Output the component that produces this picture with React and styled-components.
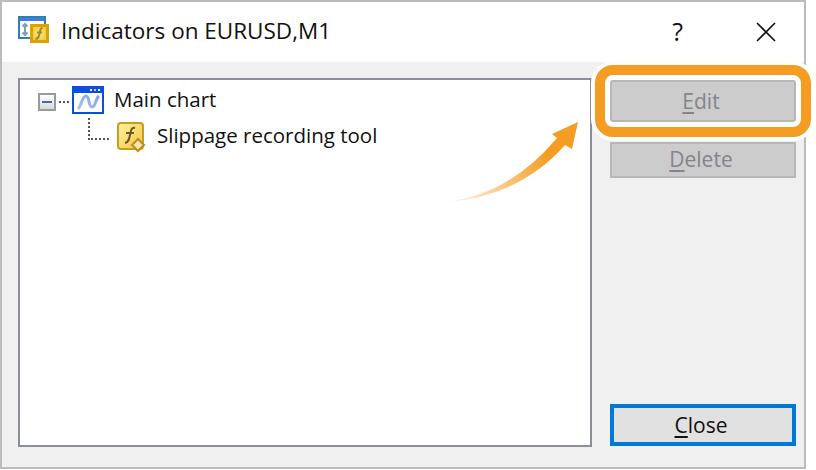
import React from 'react';
import styled, { createGlobalStyle } from 'styled-components';

const GlobalStyle = createGlobalStyle`
	html, body {
		margin: 0;
		padding: 0;
		background: #fff;
	}
	body {
		font-family: 'Open Sans', 'Noto Sans', 'Liberation Sans', sans-serif;
		color: #111;
	}
`;

const Page = styled.div`
	width: 816px;
	height: 470px;
	overflow: hidden;
	background: #fff;
`;

const Window = styled.div`
	position: relative;
	box-sizing: border-box;
	width: 806px;
	height: 469px;
	border: 2px solid #bcbcbc;
	display: flex;
	flex-direction: column;
	background: #f0f0f0;
`;

const TitleBar = styled.div`
	height: 60px;
	flex: none;
	background: #fff;
	display: flex;
	align-items: center;
	padding: 0 28px 0 16px;
`;

const TitleIcon = styled.svg`
	width: 34px;
	height: 32px;
	flex: none;
	margin-right: 9px;
`;

const Title = styled.span`
	font-size: 22.5px;
	line-height: 28px;
	margin-bottom: 2px;
	flex: 1;
`;

const HelpButton = styled.span`
	font-size: 25px;
	line-height: 28px;
	margin: 0 73px 2px 0;
`;

const Body = styled.div`
	flex: 1;
	display: flex;
	padding: 16px 8px 20px 16px;
	gap: 18px;
`;

const TreePanel = styled.div`
	box-sizing: border-box;
	width: 574px;
	border: 2px solid #8a8e96;
	background: #fff;
	padding: 4px 0 0 18px;
`;

const TreeRow = styled.div`
	display: flex;
	align-items: center;
	height: 36px;
	font-size: 20.5px;
	padding-left: ${(props) => props.$indent || 0}px;
`;

const TreeLabel = styled.span`
	margin-bottom: 6px;
`;

const Expander = styled.span`
	box-sizing: border-box;
	width: 18px;
	height: 18px;
	flex: none;
	border: 2px solid #9a9a9a;
	background: linear-gradient(#fff, #d8d8d8);
	display: flex;
	align-items: center;
	justify-content: center;
	&::after {
		content: '';
		width: 10px;
		height: 2px;
		background: #4a689f;
	}
`;

const DotsH = styled.span`
	width: ${(props) => props.$width}px;
	flex: none;
	margin: 0 ${(props) => props.$gap || 0}px;
	border-top: 2px dotted #555;
`;

const Corner = styled.span`
	box-sizing: border-box;
	width: 21px;
	height: 22px;
	flex: none;
	margin-bottom: 18px;
	border-left: 2px dotted #555;
	border-bottom: 2px dotted #555;
`;

const ChartIcon = styled.svg`
	width: 32px;
	height: 28px;
	flex: none;
	margin: 0 10px 4px 0;
`;

const FunctionIcon = styled.svg`
	width: 32px;
	height: 32px;
	flex: none;
	margin: 0 9px 0 7px;
`;

const Side = styled.div`
	width: 186px;
	display: flex;
	flex-direction: column;
	padding: 2px 0 1px;
`;

const EditWrap = styled.div`
	position: relative;
	margin-bottom: 20px;
`;

const Button = styled.div`
	box-sizing: border-box;
	height: ${(props) => props.$height}px;
	margin-top: ${(props) => (props.$bottom ? 'auto' : '0')};
	padding: 0 4px ${(props) => props.$lift || 0}px 0;
	display: flex;
	align-items: center;
	justify-content: center;
	font-size: 21px;
	color: ${(props) => (props.$active ? '#111' : '#84848c')};
	background: ${(props) => (props.$active ? '#e1e1e1' : '#cccccc')};
	border: ${(props) => (props.$active ? '4px solid #0078d7' : '2px solid #b7b7b7')};
	u {
		text-underline-offset: 3px;
	}
`;

const Highlight = styled.div`
	position: absolute;
	box-sizing: border-box;
	left: -15px;
	right: -15px;
	top: -15px;
	bottom: -15px;
	border: 10px solid #f59c22;
	border-radius: 18px;
	box-shadow: 0 0 0 4px #fff, inset 0 0 0 5px #fff;
`;

const Arrow = styled.svg`
	position: absolute;
	left: 0;
	top: 0;
	width: 816px;
	height: 470px;
	pointer-events: none;
`;

const WindowGlyph = () => (
	<TitleIcon viewBox="0 0 34 32">
		<defs>
			<radialGradient id="titleGold">
				<stop offset="0" stopColor="#fbe98a" />
				<stop offset="1" stopColor="#f2c93f" />
			</radialGradient>
		</defs>
		<rect x="1" y="1" width="26" height="21" fill="#fff" stroke="#2f7fb5" strokeWidth="2" />
		<rect x="2" y="2" width="24" height="3" fill="#3d7fe0" />
		<path d="M7 8v11M4.5 10.5L7 8l2.5 2.5M4.5 16.5L7 19l2.5-2.5M12 11h3M12 16h3" stroke="#7f9fb5" strokeWidth="2" fill="none" />
		<rect x="13.5" y="9.5" width="16" height="16" fill="url(#titleGold)" stroke="#d9a400" strokeWidth="3" />
		<path d="M24.5 12c-3 0-2 3-3 6s-1 5-4 5M19 16.5h5" stroke="#a08a30" strokeWidth="2" fill="none" />
	</TitleIcon>
);

const ChartGlyph = () => (
	<ChartIcon viewBox="0 0 32 28">
		<defs>
			<linearGradient id="waveFill" x1="0" y1="1" x2="1" y2="0">
				<stop offset="0" stopColor="#a9c3f2" />
				<stop offset="1" stopColor="#7fa3e6" />
			</linearGradient>
		</defs>
		<rect x="1" y="1" width="30" height="26" fill="#fff" stroke="#0a50dc" strokeWidth="2" />
		<rect x="1" y="1" width="30" height="6" fill="#0a50dc" />
		<rect x="18" y="3" width="2" height="2" fill="#fff" />
		<rect x="22" y="3" width="2" height="2" fill="#ffb0a0" />
		<rect x="26" y="3" width="2" height="2" fill="#fff" />
		<path d="M6 23c3-2 4-13 8-13s2 11 6 11 3-8 7-11" stroke="url(#waveFill)" strokeWidth="3" fill="none" />
	</ChartIcon>
);

const FunctionGlyph = () => (
	<FunctionIcon viewBox="0 0 32 32">
		<defs>
			<linearGradient id="funcGold" x1="0" y1="0" x2="1" y2="1">
				<stop offset="0" stopColor="#fdf0a8" />
				<stop offset="1" stopColor="#f0c83c" />
			</linearGradient>
		</defs>
		<rect x="2" y="1" width="25" height="26" rx="3" fill="url(#funcGold)" stroke="#c79f1c" strokeWidth="2" />
		<path d="M19 6c-4-1-4 3-5 7s-1 7-5 8M10 11h8" stroke="#6a5a20" strokeWidth="2" fill="none" />
		<path d="M22 17l6 6-6 6-6-6z" fill="#f8e7ae" stroke="#c08a20" strokeWidth="2" />
	</FunctionIcon>
);

const App = () => (
	<Page>
		<GlobalStyle />
		<Window>
			<TitleBar>
				<WindowGlyph />
				<Title>Indicators on EURUSD,M1</Title>
				<HelpButton>?</HelpButton>
				<svg width="20" height="20" viewBox="0 0 20 20">
					<path d="M1 1l18 18M19 1L1 19" stroke="#111" strokeWidth="1.6" />
				</svg>
			</TitleBar>
			<Body>
				<TreePanel>
					<TreeRow>
						<Expander />
						<DotsH $width={10} $gap={3} />
						<ChartGlyph />
						<TreeLabel>Main chart</TreeLabel>
					</TreeRow>
					<TreeRow $indent={50}>
						<Corner />
						<FunctionGlyph />
						<TreeLabel>Slippage recording tool</TreeLabel>
					</TreeRow>
				</TreePanel>
				<Side>
					<EditWrap>
						<Button $height={42}>
							<span><u>E</u>dit</span>
						</Button>
						<Highlight />
					</EditWrap>
					<Button $height={36} $lift={3}>
						<span><u>D</u>elete</span>
					</Button>
					<Button $height={42} $active $bottom>
						<span><u>C</u>lose</span>
					</Button>
				</Side>
			</Body>
			<Arrow viewBox="2 2 816 470">
				<defs>
					<linearGradient id="arrowFade" gradientUnits="userSpaceOnUse" x1="447" y1="202" x2="565" y2="130">
						<stop offset="0" stopColor="#f59c22" stopOpacity="0.1" />
						<stop offset="0.45" stopColor="#f59c22" stopOpacity="0.6" />
						<stop offset="0.8" stopColor="#f59c22" />
					</linearGradient>
				</defs>
				<path d="M447 202Q510 194 557 138L552 134L578 122L572 149L565 145Q520 196 447 202Z" fill="url(#arrowFade)" />
			</Arrow>
		</Window>
	</Page>
);

export default App;
